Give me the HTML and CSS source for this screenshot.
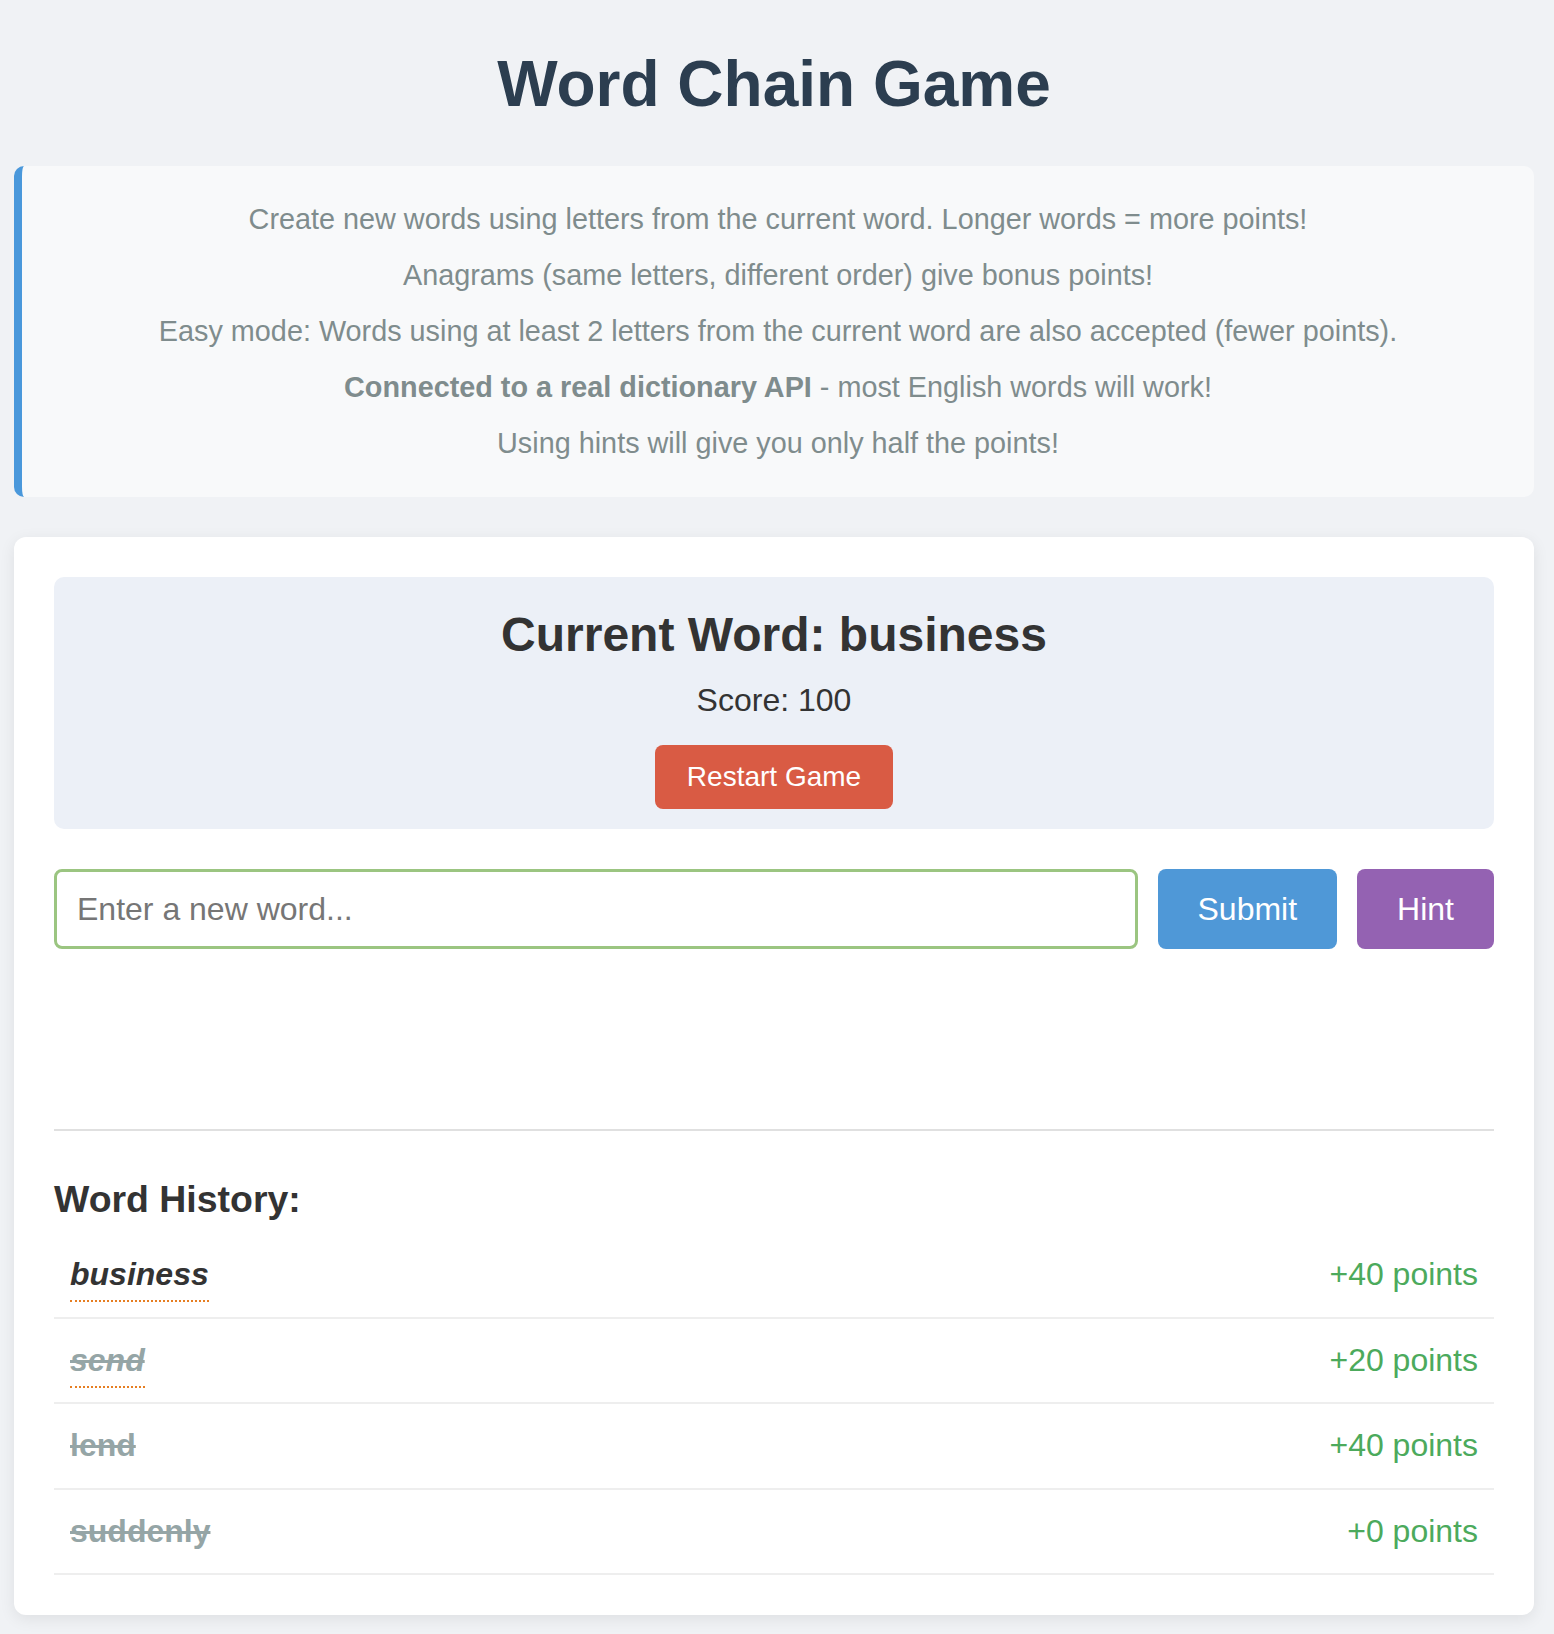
FILE: index.html
```html
<!DOCTYPE html>
<html lang="en">
<head>
<meta charset="utf-8">
<title>Word Chain Game</title>
<link rel="stylesheet" href="styles.css">
</head>
<body>
<div class="container">
  <h1 class="title">Word Chain Game</h1>

  <div class="instructions">
    <p>Create new words using letters from the current word. Longer words = more points!</p>
    <p>Anagrams (same letters, different order) give bonus points!</p>
    <p>Easy mode: Words using at least 2 letters from the current word are also accepted (fewer points).</p>
    <p><strong>Connected to a real dictionary API</strong> - most English words will work!</p>
    <p>Using hints will give you only half the points!</p>
  </div>

  <div class="card">
    <div class="status">
      <h2 class="current">Current Word: business</h2>
      <p class="score">Score: 100</p>
      <div class="restart-row">
        <button class="btn btn-restart" type="button">Restart Game</button>
      </div>
    </div>

    <div class="input-row">
      <input class="word-input" type="text" placeholder="Enter a new word...">
      <button class="btn btn-submit" type="button">Submit</button>
      <button class="btn btn-hint" type="button">Hint</button>
    </div>

    <div class="message"></div>

    <div class="history">
      <h3 class="history-title">Word History:</h3>
      <ul class="history-list">
        <li class="history-item">
          <div class="word-cell"><span class="word word-italic word-anagram">business</span></div>
          <div class="points">+40 points</div>
        </li>
        <li class="history-item">
          <div class="word-cell"><span class="word word-italic word-used word-anagram">send</span></div>
          <div class="points">+20 points</div>
        </li>
        <li class="history-item">
          <div class="word-cell"><span class="word word-used">lend</span></div>
          <div class="points">+40 points</div>
        </li>
        <li class="history-item">
          <div class="word-cell"><span class="word word-used">suddenly</span></div>
          <div class="points">+0 points</div>
        </li>
      </ul>
    </div>
  </div>
</div>
</body>
</html>
```

FILE: styles.css
```css
* {
  box-sizing: border-box;
}

body {
  margin: 0;
  background: #f0f2f5;
  font-family: "Liberation Sans", Arial, Helvetica, sans-serif;
  color: #333;
}

.container {
  width: 1520px;
  margin-left: 14px;
  padding-top: 47px;
  padding-bottom: 18px;
}

.title {
  margin: 0 0 45px;
  text-align: center;
  font-size: 64px;
  font-weight: bold;
  color: #2c3e50;
  line-height: normal;
}

.instructions {
  background: #f8f9fa;
  border-left: 8px solid #4a98db;
  border-radius: 10px;
  padding: 25px 20px 26px;
  text-align: center;
  color: #7f8c8d;
  font-size: 28.8px;
}

.instructions p {
  margin: 0;
  line-height: 56px;
}

.card {
  margin-top: 40px;
  background: #ffffff;
  border-radius: 12px;
  padding: 40px;
  box-shadow: 0 4px 16px rgba(0, 0, 0, 0.08);
}

.status {
  background: #ecf0f7;
  border-radius: 10px;
  padding: 30px 40px 20px;
  text-align: center;
}

.current {
  margin: 0 0 20px;
  font-size: 48px;
  font-weight: bold;
  color: #333;
  line-height: normal;
}

.score {
  margin: 0 0 26px;
  font-size: 32px;
  color: #333;
  line-height: normal;
}

.restart-row {
  display: flex;
  justify-content: center;
}

.btn {
  border: none;
  color: #ffffff;
  font-family: "Liberation Sans", Arial, Helvetica, sans-serif;
  border-radius: 8px;
  cursor: pointer;
}

.btn-restart {
  background: #d95b44;
  font-size: 28px;
  line-height: 32px;
  padding: 16px 32px;
}

.input-row {
  margin-top: 40px;
  display: flex;
  gap: 20px;
}

.word-input {
  flex: 1;
  height: 80px;
  border: 3px solid #9bc581;
  border-radius: 8px;
  padding: 0 20px;
  font-size: 32px;
  font-family: "Liberation Sans", Arial, Helvetica, sans-serif;
  color: #333;
  background: #fff;
  outline: none;
}

.word-input::placeholder {
  color: #767676;
}

.btn-submit,
.btn-hint {
  height: 80px;
  padding: 0 40px;
  font-size: 32px;
}

.btn-submit {
  background: #4f98d7;
}

.btn-hint {
  background: #9462b2;
}

.message {
  margin-top: 40px;
  min-height: 140px;
}

.history {
  border-top: 2px solid #e0e0e0;
}

.history-title {
  margin: 47px 0 12px;
  font-size: 37.44px;
  font-weight: bold;
  color: #333;
  line-height: normal;
}

.history-list {
  list-style: none;
  margin: 0;
  padding: 0;
}

.history-item {
  display: flex;
  justify-content: space-between;
  align-items: center;
  padding: 23.25px 16px;
  border-bottom: 2px solid #eeeeee;
  font-size: 32px;
  line-height: 37px;
}

.word {
  font-weight: bold;
  color: #333;
}

.word-italic {
  font-style: italic;
}

.word-used {
  color: #95a5a6;
  text-decoration: line-through;
}

.word-anagram {
  border-bottom: 2px dotted #e67e22;
  padding-bottom: 8px;
}

.points {
  color: #4caa5c;
}
```
